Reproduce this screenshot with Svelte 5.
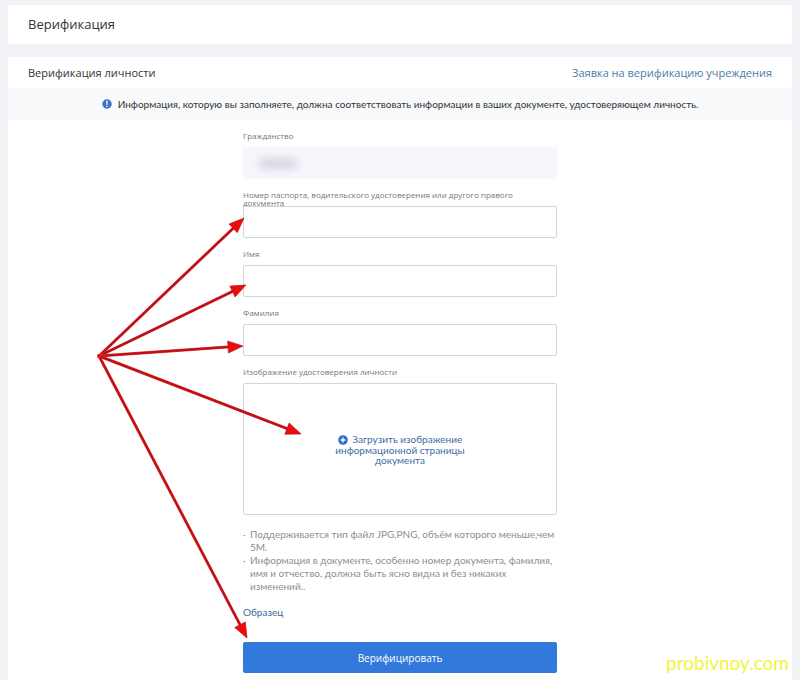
<script lang="ts">
  let citizenship = '';
  let documentNumber = '';
  let firstName = '';
  let lastName = '';

  // arrow tips, in the form's own coordinates
  const origin = { x: -144, y: 236 };
  const tips = [
    { x: 1, y: 98 },
    { x: 3, y: 165 },
    { x: 0, y: 226 },
    { x: 58, y: 314 },
    { x: 4, y: 518 }
  ];

  const arrows = tips.map((tip) => ({
    length: Math.hypot(tip.x - origin.x, tip.y - origin.y),
    angle: (Math.atan2(tip.y - origin.y, tip.x - origin.x) * 180) / Math.PI
  }));
</script>

<div class="page">
  <header class="title">
    <h1>Верификация</h1>
  </header>

  <main class="card">
    <div class="card__head">
      <h2>Верификация личности</h2>
      <a href="#institution">Заявка на верификацию учреждения</a>
    </div>

    <p class="notice">
      <svg viewBox="0 0 10 10" aria-hidden="true">
        <circle cx="5" cy="5" r="4.7" fill="#3a74c4" />
        <path d="M5 2.2v3.4" stroke="#fff" stroke-width="1.3" stroke-linecap="round" />
        <circle cx="5" cy="7.5" r=".75" fill="#fff" />
      </svg>
      <span>Информация, которую вы заполняете, должна соответствовать информации в ваших документе, удостоверяющем личность.</span>
    </p>

    <form on:submit|preventDefault>
      <div class="field">
        <label for="citizenship">Гражданство</label>
        <div class="masked">
          <input id="citizenship" bind:value={citizenship} readonly />
          <span class="smudge" aria-hidden="true"></span>
        </div>
      </div>

      <div class="field">
        <label for="document">Номер паспорта, водительского удостоверения или другого правого документа</label>
        <input id="document" bind:value={documentNumber} />
      </div>

      <div class="field">
        <label for="first-name">Имя</label>
        <input id="first-name" bind:value={firstName} />
      </div>

      <div class="field">
        <label for="last-name">Фамилия</label>
        <input id="last-name" bind:value={lastName} />
      </div>

      <div class="field">
        <span class="caption">Изображение удостоверения личности</span>
        <label class="upload" for="scan">
          <input id="scan" class="sr-only" type="file" accept=".jpg,.png" />
          <span class="upload__text">
            <svg viewBox="0 0 10 10" aria-hidden="true">
              <circle cx="5" cy="5" r="4.8" fill="#2f6fc4" />
              <path d="M5 2.6v4.8M2.6 5h4.8" stroke="#fff" stroke-width="1.3" />
            </svg>
            Загрузить изображение информационной страницы документа
          </span>
        </label>
      </div>

      <ul>
        <li>Поддерживается тип файл JPG,PNG, объём которого меньше,чем 5M.</li>
        <li>Информация в документе, особенно номер документа, фамилия, имя и отчество, должна быть ясно видна и без никаких изменений..</li>
      </ul>

      <a class="sample" href="#sample">Образец</a>
      <button type="submit">Верифицировать</button>

      <svg class="arrows" aria-hidden="true">
        {#each arrows as a}
          <g transform="translate({origin.x} {origin.y}) rotate({a.angle})">
            <path d="M0 0H{a.length - 12}" stroke="#f23a3a" stroke-width="3" />
            <path d="M0 0H{a.length - 12}" stroke="#b31218" stroke-width="2" />
            <path d="M{a.length} 0l-15 -6v12z" fill="#ec0c0c" stroke="#b31218" stroke-width=".6" />
          </g>
        {/each}
        <circle cx={origin.x} cy={origin.y} r="2" fill="#ee1111" />
      </svg>
    </form>
  </main>

  <span class="watermark">probivnoy.com</span>
</div>

<style>
  :global(body) { background: #f0f2f6; }

  .page {
    position: relative; box-sizing: border-box; min-height: 100vh; padding: 5px 8px 0;
    display: flex; flex-direction: column; gap: 13px;
    font-family: 'Open Sans', 'Noto Sans', sans-serif; color: #333;
  }
  h1, h2, p, ul { margin: 0; padding: 0; font-weight: 400; }
  a { color: #4d7ba8; text-decoration: none; }

  .title { padding: 0 20px; background: #fff; }
  h1 { font-size: 13px; line-height: 39px; }

  .card { flex: 1; background: #fff; }
  .card__head { display: flex; justify-content: space-between; padding: 0 20px; font-size: 11px; line-height: 31px; }
  h2 { font-size: 11px; }

  .notice, .upload__text, ul, .sample { font-family: Lato, 'Open Sans', sans-serif; }
  .notice {
    display: flex; align-items: center; justify-content: center; gap: 6px;
    background: #f7f9fb; font-size: 10px; line-height: 32px;
  }
  .notice svg { width: 10px; height: 10px; }

  form {
    position: relative; width: 314px; max-width: 100%; margin: 0 auto; padding: 12px 0 7px;
    display: flex; flex-direction: column; gap: 12px;
  }
  .field { display: flex; flex-direction: column; gap: 7px; }
  /* a long label runs over the top edge of its box */
  .field > label:not(.upload), .caption { height: 8px; max-width: 300px; font-size: 8px; line-height: 8px; color: #777; }
  .field input:not(.sr-only) {
    display: block; box-sizing: border-box; width: 100%; height: 32px; padding: 0 12px;
    border: 1px solid #d3d5d6; border-radius: 2px; background: #fff; font: inherit; font-size: 11px; outline: none;
  }
  .masked { position: relative; }
  .field .masked input { border-color: #f8f5fd; background: #f8f5fd; }
  .smudge {
    position: absolute; left: 16px; top: 12px; width: 38px; height: 9px;
    border-radius: 4px; background: #d2cfd8; filter: blur(4px);
  }

  .upload {
    position: relative; box-sizing: border-box; height: 132px; border: 1px solid #d3d5d6; border-radius: 2px;
    display: flex; align-items: center; justify-content: center; cursor: pointer;
  }
  .upload__text { width: 140px; text-align: center; font-size: 10px; line-height: 10px; color: #3b6ba5; }
  .upload__text svg { width: 10px; height: 10px; margin-right: 2px; vertical-align: -2px; }

  ul { padding: 1px 0 0 7px; list-style: none; font-size: 10px; line-height: 13px; color: #8e8e8e; }
  li::before { content: '·'; float: left; margin-left: -7px; }
  .sample { align-self: flex-start; font-size: 10px; line-height: 14px; color: #4069a0; }
  button {
    height: 31px; margin-top: 11px; border: 0; border-radius: 2px; background: #3379dc;
    color: #fff; font: inherit; font-size: 10px; cursor: pointer;
  }

  .arrows { position: absolute; left: 0; top: 0; width: 100%; height: 100%; overflow: visible; pointer-events: none; }

  .watermark {
    position: absolute; right: 11px; bottom: 5px; font-family: Lato, sans-serif;
    font-size: 19px; line-height: 24px; color: #f2f53a;
  }

  .sr-only {
    position: absolute; width: 1px; height: 1px; padding: 0; margin: -1px; overflow: hidden;
    clip: rect(0, 0, 0, 0); white-space: nowrap; border: 0;
  }
</style>
